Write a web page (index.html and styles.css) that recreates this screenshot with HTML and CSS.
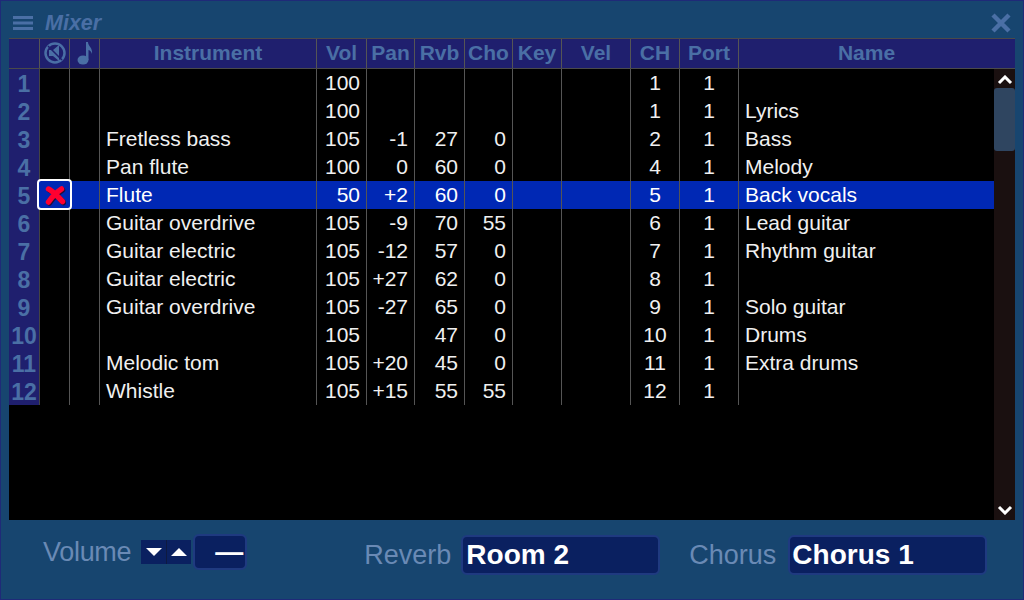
FILE: index.html
```html
<!DOCTYPE html>
<html>
<head>
<meta charset="utf-8">
<title>Mixer</title>
<link rel="stylesheet" href="styles.css">
</head>
<body>
<div class="window">
  <div class="titlebar">
    <svg class="menu-icon" width="20" height="14" viewBox="0 0 20 14"><path d="M0 1.500h20M0 7h20M0 12.500h20" stroke="#4a6fa5" stroke-width="3"/></svg>
    <span class="title">Mixer</span>
    <svg class="close-icon" width="20" height="20" viewBox="0 0 20 20"><path d="M2 2L18 18M18 2L2 18" stroke="#4a6fa5" stroke-width="4.500"/></svg>
  </div>
  <div class="table">
    <div class="row head">
      <div class="cell"></div>
      <div class="cell"><svg width="24" height="24" viewBox="0 0 24 24"><circle cx="12" cy="12" r="9.500" fill="none" stroke="#4a6fa5" stroke-width="2.500"/><path d="M6 9h4l6-5v16l-6-5H6z" fill="#4a6fa5"/><path d="M5 5L19 19" stroke="#1f1f6e" stroke-width="1.500"/></svg></div>
      <div class="cell"><svg width="16" height="24" viewBox="0 0 16 24"><ellipse cx="6" cy="19" rx="5.500" ry="4.500" fill="#4a6fa5"/><path d="M9 19V1h2c0 4 5 6 4 12-1-3-2.500-4-3.500-4V19z" fill="#4a6fa5"/></svg></div>
      <div class="cell">Instrument</div><div class="cell">Vol</div><div class="cell">Pan</div><div class="cell">Rvb</div><div class="cell">Cho</div><div class="cell">Key</div><div class="cell">Vel</div><div class="cell">CH</div><div class="cell">Port</div><div class="cell name-head">Name</div>
    </div>
    <div class="body">
      <div class="rows">
        <div class="row"><div class="cell num">1</div><div class="cell"></div><div class="cell"></div><div class="cell left"></div><div class="cell right">100</div><div class="cell right"></div><div class="cell right"></div><div class="cell right"></div><div class="cell"></div><div class="cell"></div><div class="cell">1</div><div class="cell">1</div><div class="cell left"></div></div>
        <div class="row"><div class="cell num">2</div><div class="cell"></div><div class="cell"></div><div class="cell left"></div><div class="cell right">100</div><div class="cell right"></div><div class="cell right"></div><div class="cell right"></div><div class="cell"></div><div class="cell"></div><div class="cell">1</div><div class="cell">1</div><div class="cell left">Lyrics</div></div>
        <div class="row"><div class="cell num">3</div><div class="cell"></div><div class="cell"></div><div class="cell left">Fretless bass</div><div class="cell right">105</div><div class="cell right">-1</div><div class="cell right">27</div><div class="cell right">0</div><div class="cell"></div><div class="cell"></div><div class="cell">2</div><div class="cell">1</div><div class="cell left">Bass</div></div>
        <div class="row"><div class="cell num">4</div><div class="cell"></div><div class="cell"></div><div class="cell left">Pan flute</div><div class="cell right">100</div><div class="cell right">0</div><div class="cell right">60</div><div class="cell right">0</div><div class="cell"></div><div class="cell"></div><div class="cell">4</div><div class="cell">1</div><div class="cell left">Melody</div></div>
        <div class="row selected"><div class="cell num">5</div><div class="cell mute"><span class="mute-box"><svg width="22" height="22" viewBox="0 0 22 22"><path d="M4.500 5C9 7 13 12 18.500 17.500M17.500 5C13 8 8 13 4.500 18" transform="translate(1 1)" fill="none" stroke="#20103a" stroke-width="5.500" stroke-linecap="round"/><path d="M4.500 5C9 7 13 12 18.500 17.500M17.500 5C13 8 8 13 4.500 18" fill="none" stroke="#ff0030" stroke-width="5.500" stroke-linecap="round"/></svg></span></div><div class="cell"></div><div class="cell left">Flute</div><div class="cell right">50</div><div class="cell right">+2</div><div class="cell right">60</div><div class="cell right">0</div><div class="cell"></div><div class="cell"></div><div class="cell">5</div><div class="cell">1</div><div class="cell left">Back vocals</div></div>
        <div class="row"><div class="cell num">6</div><div class="cell"></div><div class="cell"></div><div class="cell left">Guitar overdrive</div><div class="cell right">105</div><div class="cell right">-9</div><div class="cell right">70</div><div class="cell right">55</div><div class="cell"></div><div class="cell"></div><div class="cell">6</div><div class="cell">1</div><div class="cell left">Lead guitar</div></div>
        <div class="row"><div class="cell num">7</div><div class="cell"></div><div class="cell"></div><div class="cell left">Guitar electric</div><div class="cell right">105</div><div class="cell right">-12</div><div class="cell right">57</div><div class="cell right">0</div><div class="cell"></div><div class="cell"></div><div class="cell">7</div><div class="cell">1</div><div class="cell left">Rhythm guitar</div></div>
        <div class="row"><div class="cell num">8</div><div class="cell"></div><div class="cell"></div><div class="cell left">Guitar electric</div><div class="cell right">105</div><div class="cell right">+27</div><div class="cell right">62</div><div class="cell right">0</div><div class="cell"></div><div class="cell"></div><div class="cell">8</div><div class="cell">1</div><div class="cell left"></div></div>
        <div class="row"><div class="cell num">9</div><div class="cell"></div><div class="cell"></div><div class="cell left">Guitar overdrive</div><div class="cell right">105</div><div class="cell right">-27</div><div class="cell right">65</div><div class="cell right">0</div><div class="cell"></div><div class="cell"></div><div class="cell">9</div><div class="cell">1</div><div class="cell left">Solo guitar</div></div>
        <div class="row"><div class="cell num">10</div><div class="cell"></div><div class="cell"></div><div class="cell left"></div><div class="cell right">105</div><div class="cell right"></div><div class="cell right">47</div><div class="cell right">0</div><div class="cell"></div><div class="cell"></div><div class="cell">10</div><div class="cell">1</div><div class="cell left">Drums</div></div>
        <div class="row"><div class="cell num">11</div><div class="cell"></div><div class="cell"></div><div class="cell left">Melodic tom</div><div class="cell right">105</div><div class="cell right">+20</div><div class="cell right">45</div><div class="cell right">0</div><div class="cell"></div><div class="cell"></div><div class="cell">11</div><div class="cell">1</div><div class="cell left">Extra drums</div></div>
        <div class="row"><div class="cell num">12</div><div class="cell"></div><div class="cell"></div><div class="cell left">Whistle</div><div class="cell right">105</div><div class="cell right">+15</div><div class="cell right">55</div><div class="cell right">55</div><div class="cell"></div><div class="cell"></div><div class="cell">12</div><div class="cell">1</div><div class="cell left"></div></div>
      </div>
      <div class="scrollbar">
        <svg class="arrow" width="16" height="10" viewBox="0 0 16 10"><path d="M2 8L8 2L14 8" fill="none" stroke="#fff" stroke-width="3"/></svg>
        <div class="thumb"></div>
        <svg class="arrow down" width="16" height="10" viewBox="0 0 16 10"><path d="M2 2L8 8L14 2" fill="none" stroke="#fff" stroke-width="3"/></svg>
      </div>
    </div>
  </div>
  <div class="footer">
    <div class="vol-group">
      <span class="label vol-label">Volume</span>
      <div class="steppers">
        <span class="step"><svg width="16" height="8" viewBox="0 0 16 8"><path d="M0 0H16L8 8z" fill="#fff"/></svg></span>
        <span class="step"><svg width="16" height="8" viewBox="0 0 16 8"><path d="M0 8H16L8 0z" fill="#fff"/></svg></span>
      </div>
      <div class="field vol-field">—</div>
    </div>
    <div class="rev-group">
      <span class="label">Reverb</span>
      <div class="field wide">Room 2</div>
    </div>
    <div class="cho-group">
      <span class="label">Chorus</span>
      <div class="field wide cho-field">Chorus 1</div>
    </div>
  </div>
</div>
</body>
</html>
```

FILE: styles.css
```css
* { box-sizing: border-box; }
html, body { margin: 0; padding: 0; }
body {
  width: 1024px;
  height: 600px;
  overflow: hidden;
  font-family: "Liberation Sans", Arial, sans-serif;
}
.window {
  width: 1024px;
  height: 600px;
  background: #17456f;
  border: 1px solid #1f2a78;
  display: flex;
  flex-direction: column;
}
.titlebar {
  height: 37px;
  flex: none;
  display: flex;
  align-items: center;
  padding: 7px 12px 0 12px;
}
.menu-icon { flex: none; }
.title {
  margin-left: 12px;
  font: italic bold 21.5px "Liberation Sans", sans-serif;
  color: #4a6fa5;
}
.close-icon { margin-left: auto; flex: none; }
.table {
  margin: 0 8px;
  width: 1006px;
  height: 482px;
  background: #000;
  flex: none;
  display: flex;
  flex-direction: column;
}
.row {
  display: grid;
  grid-template-columns: 31px 30px 30px 217px 50px 48px 50px 48px 49px 69px 49px 59px 1fr;
  grid-template-rows: 28px;
  height: 28px;
  color: #f0f0f0;
  font-size: 21px;
}
.cell {
  border-right: 1px solid #555;
  display: flex;
  align-items: center;
  justify-content: center;
  line-height: 28px;
  min-width: 0;
}
.cell:last-child { border-right: 0; }
.head {
  grid-template-rows: 29px;
  height: 31px;
  background: #1f1f6e;
  border-top: 1px solid #4a4a4a;
  border-bottom: 1px solid #4a4a4a;
  color: #4a6fa5;
  font-weight: bold;
}
.head .cell { padding-bottom: 2px; }
.head .name-head { padding-right: 21px; }
.body { flex: 1; display: flex; min-height: 0; }
.rows { width: 985px; flex: none; }
.left { justify-content: flex-start; padding-left: 6px; }
.right { justify-content: flex-end; padding-right: 6px; }
.num {
  background: #1f1f6e;
  color: #4a6fa5;
  font-weight: bold;
  font-size: 23px;
  line-height: 26px;
  border-right: 1px solid #444;
  padding-top: 2px;
}
.selected { color: #fff; }
.selected .cell:not(.num):not(.mute) { background: #0028b4; }
.mute { position: relative; }
.mute-box {
  position: absolute;
  left: -3px;
  top: -2px;
  width: 35px;
  height: 31px;
  background: #0028b4;
  border: 2px solid #fff;
  border-radius: 4px;
  display: flex;
  align-items: center;
  justify-content: center;
  z-index: 1;
}
.scrollbar {
  width: 21px;
  flex: none;
  background: #1a1010;
  display: flex;
  flex-direction: column;
  align-items: center;
}
.arrow { flex: none; margin-top: 6px; }
.thumb {
  width: 21px;
  height: 63px;
  margin-top: 3px;
  background: #2f4560;
  border-radius: 3px;
}
.arrow.down { margin-top: auto; margin-bottom: 5px; }
.footer {
  flex: 1;
  display: flex;
  align-items: flex-start;
  padding-top: 14px;
}
.label {
  font-size: 27px;
  color: #6a8ab5;
}
.vol-label { letter-spacing: -0.3px; }
.vol-group { display: flex; align-items: center; margin-left: 42px; height: 36px; }
.rev-group { display: flex; align-items: center; margin-left: 117px; margin-top: 1px; height: 40px; }
.cho-group { display: flex; align-items: center; margin-left: 29px; margin-top: 1px; height: 40px; }
.steppers { display: flex; margin-left: 10px; }
.step {
  width: 25px;
  height: 24px;
  background: #0a2060;
  border-left: 1px solid #0e1a40;
  display: flex;
  align-items: center;
  justify-content: center;
}
.step:first-child { border-left: 0; }
.field {
  background: #0a2060;
  border: 2px solid #1f3a80;
  border-radius: 6px;
  color: #fff;
  font-weight: bold;
  font-size: 28px;
  display: flex;
  align-items: center;
}
.vol-field {
  width: 54px;
  height: 36px;
  margin-left: 2px;
  justify-content: flex-end;
  padding-right: 2px;
}
.wide {
  width: 199px;
  height: 40px;
  margin-left: 10px;
  padding-left: 3px;
}
.cho-field { margin-left: 12px; padding-left: 2px; }
```
